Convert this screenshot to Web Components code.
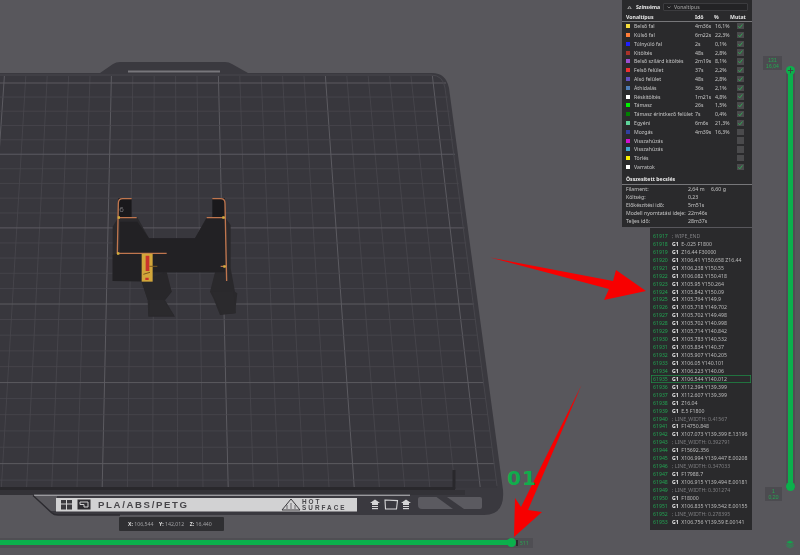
<!DOCTYPE html>
<html>
<head>
<meta charset="utf-8">
<title>Preview</title>
<style>
  html, body { margin: 0; padding: 0; background: #58575c; overflow: hidden; }
  body { font-family: "Noto Sans", "Liberation Sans", sans-serif; }
</style>
</head>
<body>
<slicer-app>
  <bed-view></bed-view>

  <legend-panel>
    <legend-row color="#f5dc3c" name="Belső fal" time="4m36s" pct="16,1%" checked></legend-row>
    <legend-row color="#ff7d38" name="Külső fal" time="6m22s" pct="22,3%" checked></legend-row>
    <legend-row color="#1f1fff" name="Túlnyúló fal" time="2s" pct="0,1%" checked></legend-row>
    <legend-row color="#a8322a" name="Kitöltés" time="48s" pct="2,8%" checked></legend-row>
    <legend-row color="#9a4fd0" name="Belső szilárd kitöltés" time="2m19s" pct="8,1%" checked></legend-row>
    <legend-row color="#f03030" name="Felső felület" time="37s" pct="2,2%" checked></legend-row>
    <legend-row color="#6050c0" name="Alsó felület" time="48s" pct="2,8%" checked></legend-row>
    <legend-row color="#4f7fb8" name="Áthidalás" time="36s" pct="2,1%" checked></legend-row>
    <legend-row color="#ffffff" name="Réskitöltés" time="1m21s" pct="4,8%" checked></legend-row>
    <legend-row color="#00f000" name="Támasz" time="26s" pct="1,5%" checked></legend-row>
    <legend-row color="#008000" name="Támasz érintkező felület" time="7s" pct="0,4%" checked></legend-row>
    <legend-row color="#5ed39a" name="Egyéni" time="6m6s" pct="21,3%" checked></legend-row>
    <legend-row color="#3040a0" name="Mozgás" time="4m39s" pct="16,3%"></legend-row>
    <legend-row color="#d010d0" name="Visszahúzás"></legend-row>
    <legend-row color="#40a8d0" name="Visszahúzás"></legend-row>
    <legend-row color="#f8f000" name="Törlés"></legend-row>
    <legend-row color="#ffffff" name="Varratok" checked></legend-row>
    <summary-row slot="summary" label="Filament:" value="2,64 m" extra="6,60 g"></summary-row>
    <summary-row slot="summary" label="Költség:" value="0,23"></summary-row>
    <summary-row slot="summary" label="Előkészítési idő:" value="5m51s"></summary-row>
    <summary-row slot="summary" label="Modell nyomtatási ideje:" value="22m46s"></summary-row>
    <summary-row slot="summary" label="Teljes idő:" value="28m37s"></summary-row>
  </legend-panel>

  <gcode-panel>
    <gcode-line n="61917">; WIPE_END</gcode-line>
    <gcode-line n="61918" cmd="G1">E-.025 F1800</gcode-line>
    <gcode-line n="61919" cmd="G1">Z16.44 F30000</gcode-line>
    <gcode-line n="61920" cmd="G1">X106.41 Y150.658 Z16.44</gcode-line>
    <gcode-line n="61921" cmd="G1">X106.238 Y150.55</gcode-line>
    <gcode-line n="61922" cmd="G1">X106.082 Y150.418</gcode-line>
    <gcode-line n="61923" cmd="G1">X105.95 Y150.264</gcode-line>
    <gcode-line n="61924" cmd="G1">X105.842 Y150.09</gcode-line>
    <gcode-line n="61925" cmd="G1">X105.764 Y149.9</gcode-line>
    <gcode-line n="61926" cmd="G1">X105.718 Y149.702</gcode-line>
    <gcode-line n="61927" cmd="G1">X105.702 Y149.498</gcode-line>
    <gcode-line n="61928" cmd="G1">X105.702 Y140.998</gcode-line>
    <gcode-line n="61929" cmd="G1">X105.714 Y140.842</gcode-line>
    <gcode-line n="61930" cmd="G1">X105.783 Y140.532</gcode-line>
    <gcode-line n="61931" cmd="G1">X105.834 Y140.37</gcode-line>
    <gcode-line n="61932" cmd="G1">X105.907 Y140.205</gcode-line>
    <gcode-line n="61933" cmd="G1">X106.05 Y140.101</gcode-line>
    <gcode-line n="61934" cmd="G1">X106.223 Y140.06</gcode-line>
    <gcode-line n="61935" cmd="G1" current>X106.544 Y140.012</gcode-line>
    <gcode-line n="61936" cmd="G1">X112.394 Y139.399</gcode-line>
    <gcode-line n="61937" cmd="G1">X112.607 Y139.399</gcode-line>
    <gcode-line n="61938" cmd="G1">Z16.04</gcode-line>
    <gcode-line n="61939" cmd="G1">E.5 F1800</gcode-line>
    <gcode-line n="61940">; LINE_WIDTH: 0.41567</gcode-line>
    <gcode-line n="61941" cmd="G1">F14750.848</gcode-line>
    <gcode-line n="61942" cmd="G1">X107.073 Y139.399 E.13196</gcode-line>
    <gcode-line n="61943">; LINE_WIDTH: 0.392791</gcode-line>
    <gcode-line n="61944" cmd="G1">F15692.356</gcode-line>
    <gcode-line n="61945" cmd="G1">X106.994 Y139.447 E.00208</gcode-line>
    <gcode-line n="61946">; LINE_WIDTH: 0.347033</gcode-line>
    <gcode-line n="61947" cmd="G1">F17988.7</gcode-line>
    <gcode-line n="61948" cmd="G1">X106.915 Y139.494 E.00181</gcode-line>
    <gcode-line n="61949">; LINE_WIDTH: 0.301274</gcode-line>
    <gcode-line n="61950" cmd="G1">F18000</gcode-line>
    <gcode-line n="61951" cmd="G1">X106.835 Y139.542 E.00155</gcode-line>
    <gcode-line n="61952">; LINE_WIDTH: 0.278395</gcode-line>
    <gcode-line n="61953" cmd="G1">X106.756 Y139.59 E.00141</gcode-line>
  </gcode-panel>

  <layer-slider top-a="131" top-b="16,04" bottom-a="1" bottom-b="0,20"></layer-slider>
  <move-slider value="511"></move-slider>
  <coord-bar x="106,544" y="142,012" z="16,440"></coord-bar>
  <markup-layer></markup-layer>
</slicer-app>

<script>
/* Base app: a fixed-size canvas the overlays sit on */
class SlicerApp extends HTMLElement {
  constructor() {
    super();
    this.attachShadow({ mode: 'open' });
    this.shadowRoot.innerHTML = `
      <style>
        :host {
          display: block;
          position: relative;
          width: 800px;
          height: 555px;
          overflow: hidden;
          background: #58575c;
          font-family: "Noto Sans", "Liberation Sans", sans-serif;
        }
      </style>
      <slot></slot>
    `;
  }
}

/* Build plate drawn on a free canvas */
class BedView extends HTMLElement {
  constructor() {
    super();
    this.attachShadow({ mode: 'open' });
  }

  connectedCallback() {
    this.shadowRoot.innerHTML = `
      <style>
        :host { position: absolute; inset: 0; display: block; }
        svg { display: block; width: 800px; height: 555px; filter: blur(.3px); }
        .plate-label { font-family: "Liberation Sans", sans-serif; font-weight: 700; fill: #47464a; }
      </style>
      <svg viewBox="0 0 800 555" xmlns="http://www.w3.org/2000/svg">
        <path fill="#3a393f" d="M-5 73 H100 L113 64 Q116 62 120 62 H225 Q229 62 232 64 L248 73 H432 Q446 73 449 88 L503 490 Q505 515 484 515 H56 Q53 515 51 513 L33 495 H-5 Z"/>
        <path fill="#38373d" d="M-5 76 H430 Q442 76 445 88 L497 488 H-5 Z"/>
        <rect x="128" y="70.5" width="92" height="2" fill="#77767b"/>
        ${this.gridLines()}
        <path fill="none" stroke="#47464c" stroke-width="1" d="M-5 75 H431 Q443 75 445 88 L497 486"/>
        <rect x="-5" y="487" width="460" height="3" fill="#29282c"/>
        <rect x="452.5" y="470" width="3" height="19" fill="#29282c"/>
        <rect x="-5" y="490" width="470" height="5" fill="#333237"/>
        <rect x="34" y="494.6" width="376" height="1.4" fill="#9a999d"/>

        <path fill="#58575c" d="M-5 496 H33 L53 515 H-5 Z"/>
        <path fill="#58575c" d="M34 496 H57 V511 H50 Z"/>
        <path fill="none" stroke="#2c2b30" stroke-width="1.4" d="M33 495.5 L52 513 Q54 515 58 515 H120"/>
        <rect x="56" y="498" width="301" height="13.5" fill="#d2d2d3"/>
        <g fill="none" stroke="#2e2d31">
          <rect x="61" y="500" width="11" height="9.5" fill="#3a393d" stroke="none"/>
          <path d="M66.5 499 V510 M61 504 H72" stroke="#d2d2d3" stroke-width="1"/>
          <rect x="77.5" y="499.5" width="13" height="10" fill="#2e2d31" stroke="none"/>
          <path d="M80 502 H88 V507 H84 V504.5 H80 Z" fill="none" stroke="#d2d2d3" stroke-width="1"/>
        </g>
        <text class="plate-label" x="98" y="508.2" font-size="9.6" letter-spacing="1.65">PLA/ABS/PETG</text>
        <path d="M282 510 L291 499 L300 510 Z" fill="none" stroke="#3a393d" stroke-width="1"/>
        <path d="M287 509 V505 M291 509 V503 M295 509 V505" stroke="#6a696d" stroke-width="1"/>
        <text class="plate-label" x="302" y="504" font-size="6.4" letter-spacing="2">HOT</text>
        <text class="plate-label" x="302" y="510.4" font-size="6.4" letter-spacing="2">SURFACE</text>

        <g fill="#d6d6d7">
          <path d="M375 499.5 L380 503 H378 V505 H372 V503 H370 Z"/>
          <rect x="372" y="506" width="6" height="1"/><rect x="372" y="508" width="6" height="1.2"/>
          <path d="M406 499.5 L411 503 H409 V505 H403 V503 H401 Z"/>
          <rect x="403" y="506" width="6" height="1"/><rect x="403" y="508" width="6" height="1.2"/>
        </g>
        <path d="M385 500 L397.5 500.6 L396.5 509 L385.5 509 Z" fill="none" stroke="#d6d6d7" stroke-width="1.1"/>
        <path fill="#5b5a60" d="M420 497 H436.5 L453 509 H422 Q418 509 418 505 V499 Q418 497 420 497 Z"/>
        <path fill="#5b5a60" d="M447 497 H480 Q482 497 482 499 V507 Q482 509 480 509 H464 Z"/>

        <g transform="translate(100 185) scale(.3333)">
          <path fill="#2a292c" d="M38 125 L55 97 L112 97 L147 160 L285 160 L320 97 L375 97 L392 120 L392 250 L405 320 L412 325 L405 385 L360 390 L340 340 L330 320 L345 262 L200 262 L200 280 L215 320 L195 345 L225 395 L145 395 L143 345 L125 290 L38 288 Z"/>
          <path fill="#222124" d="M55 205 H200 V262 H125 V288 H38 V210 Z M147 160 H285 L320 100 H375 V262 H200 V205 H60 V110 H112 Z"/>
          <path fill="#1a191c" d="M55 40 H95 V97 H55 Z M337 40 H375 V97 H337 Z"/>
          <path fill="#2b2a2d" d="M150 345 H190 L222 392 H146 Z M335 320 L400 318 L408 385 L365 388 Z"/>
          <path fill="#28272a" d="M125 290 L200 260 L215 320 L195 345 L143 345 Z"/>
          <path fill="none" stroke="#c0764e" stroke-width="4" d="M95 41 H68 Q55 41 55 55 L52 205 H200 M55 98 H110 M337 41 H362 Q375 41 375 55 L380 288 M320 98 H375 M362 244 H380"/>
          <path fill="#d2a63a" d="M125 206 H158 V290 H125 Z"/>
          <path fill="#c8342c" d="M137 212 H148 V258 H137 Z M136 278 H146 V285 H136 Z"/>
          <path fill="none" stroke="#7a5a20" stroke-width="3" d="M130 268 L150 262 M148 244 H172"/>
          <path fill="#d5ae3c" d="M53 94 h7 v7 h-7 z M367 94 h7 v7 h-7 z M51 202 h7 v7 h-7 z M370 241 h7 v7 h-7 z"/>
          <text x="58" y="81" font-size="24" font-family="Noto Sans, sans-serif" fill="#77767a">6</text>
        </g>
      </svg>
    `;
  }

  // Perspective grid of the plate, a major line every five cells
  gridLines() {
    let out = '';
    for (let k = -9; k <= 11; k++) {
      const top = 197 + 21.4 * k;
      const bottom = 203 + 25.2 * k;
      const major = (k + 9) % 5 === 0;
      out += `<line x1="${top}" y1="76" x2="${bottom}" y2="487" stroke="${major ? '#5c5b61' : '#49484e'}" stroke-width="${major ? 1 : .8}"/>`;
    }
    for (let n = 0; n < 28; n++) {
      const y = 83 + 14 * n + 0.049 * n * n;
      if (y > 486) break;
      const right = 446 + (y - 83) * 0.127;
      const major = n % 5 === 0;
      out += `<line x1="-5" y1="${y}" x2="${right}" y2="${y}" stroke="${major ? '#5c5b61' : '#49484e'}" stroke-width="${major ? 1 : .8}"/>`;
    }
    return out;
  }
}

/* Line type legend with the estimate summary */
class LegendPanel extends HTMLElement {
  constructor() {
    super();
    this.attachShadow({ mode: 'open' });
    this.shadowRoot.innerHTML = `
      <style>
        :host {
          position: absolute;
          left: 622px;
          top: 0;
          width: 130px;
          height: 227px;
          display: flex;
          flex-direction: column;
          background: #2a2a2c;
          color: #c6c6c6;
          font-size: 5.2px;
          line-height: 8px;
          filter: blur(.3px);
        }
        .title {
          display: flex;
          align-items: center;
          height: 13px;
          padding: 1px 4px 0 5px;
          box-sizing: border-box;
        }
        .title svg { width: 5px; height: 5px; margin-right: 4px; }
        .title b { color: #e8e8e8; width: 27px; flex: none; }
        .combo {
          flex: 1;
          height: 8px;
          display: flex;
          align-items: center;
          gap: 3px;
          padding-left: 3px;
          background: #232325;
          border: .5px solid #3c3c3f;
          border-radius: 1px;
          box-sizing: border-box;
          color: #a8a8a8;
        }
        .head {
          display: grid;
          grid-template-columns: 69px 19px 16px 1fr;
          height: 8.8px;
          align-items: center;
          padding-left: 4px;
          border-bottom: .7px solid #77777a;
          box-sizing: border-box;
          font-weight: 700;
          color: #e4e4e4;
        }
        .rows { display: flex; flex-direction: column; }
        .total {
          margin-top: 3.6px;
          height: 8.7px;
          padding: 0 4px;
          box-sizing: content-box;
          font-weight: 700;
          color: #ececec;
          border-bottom: .7px solid #77777a;
        }
        .summary { display: flex; flex-direction: column; padding-top: .3px; }
      </style>
      <div class="title">
        <svg viewBox="0 0 10 10"><path d="M1 8 L5 2 L9 8 M3 8 V6 H7 V8" fill="none" stroke="#b5b5b5" stroke-width="1.2"/></svg>
        <b>Színséma</b>
        <div class="combo">
          <svg width="4" height="3" viewBox="0 0 8 6" style="width:4px;height:3px;margin:0"><path d="M1 1 L4 4 L7 1" fill="none" stroke="#aaa" stroke-width="1.2"/></svg>
          <span>Vonaltípus</span>
        </div>
      </div>
      <div class="head"><span>Vonaltípus</span><span>Idő</span><span>%</span><span>Mutat</span></div>
      <div class="rows"><slot></slot></div>
      <div class="total">Összesített becslés</div>
      <div class="summary"><slot name="summary"></slot></div>
    `;
  }
}

class LegendRow extends HTMLElement {
  constructor() {
    super();
    this.attachShadow({ mode: 'open' });
  }

  connectedCallback() {
    const on = this.hasAttribute('checked');
    this.shadowRoot.innerHTML = `
      <style>
        :host {
          display: grid;
          grid-template-columns: 8px 61px 20px 22px 8px;
          height: 8.8px;
          align-items: center;
          padding-left: 4px;
          white-space: nowrap;
        }
        i { display: block; width: 4px; height: 4px; background: ${this.getAttribute('color')}; }
        .box {
          width: 6.5px;
          height: 6.5px;
          background: #4a4a4c;
          grid-column: 5;
        }
        .box svg { display: block; width: 6.5px; height: 6.5px; }
      </style>
      <i></i>
      <span>${this.getAttribute('name')}</span>
      <span>${this.getAttribute('time') || ''}</span>
      <span>${this.getAttribute('pct') || ''}</span>
      <div class="box">${on ? '<svg viewBox="0 0 10 10"><path d="M2 5 L4.2 7.6 L8.4 2.2" fill="none" stroke="#2fa552" stroke-width="1.5"/></svg>' : ''}</div>
    `;
  }
}

class SummaryRow extends HTMLElement {
  constructor() {
    super();
    this.attachShadow({ mode: 'open' });
  }

  connectedCallback() {
    this.shadowRoot.innerHTML = `
      <style>
        :host {
          display: grid;
          grid-template-columns: 62px 23px 1fr;
          height: 8px;
          align-items: center;
          padding-left: 4px;
          white-space: nowrap;
        }
      </style>
      <span>${this.getAttribute('label')}</span>
      <span>${this.getAttribute('value')}</span>
      <span>${this.getAttribute('extra') || ''}</span>
    `;
  }
}

/* G-code viewer list */
class GcodePanel extends HTMLElement {
  constructor() {
    super();
    this.attachShadow({ mode: 'open' });
    this.shadowRoot.innerHTML = `
      <style>
        :host {
          position: absolute;
          left: 650px;
          top: 228px;
          width: 102px;
          height: 302px;
          box-sizing: border-box;
          padding-top: 4px;
          display: flex;
          flex-direction: column;
          background: #2a2a2c;
          font-size: 5.2px;
          filter: blur(.3px);
        }
      </style>
      <slot></slot>
    `;
  }
}

class GcodeLine extends HTMLElement {
  constructor() {
    super();
    this.attachShadow({ mode: 'open' });
  }

  connectedCallback() {
    const cmd = this.getAttribute('cmd');
    this.shadowRoot.innerHTML = `
      <style>
        :host {
          display: flex;
          align-items: center;
          height: 7.95px;
          flex: none;
          padding-left: 3px;
          white-space: nowrap;
          color: ${cmd ? '#bcbcbc' : '#7e7e81'};
        }
        :host([current]) { box-shadow: inset 0 0 0 .7px #1f8a45; margin-left: 1px; margin-right: 1px; padding-left: 2px; }
        .n { width: 19px; color: #22a352; flex: none; }
        b { color: #ececec; margin-right: 2.5px; }
      </style>
      <span class="n">${this.getAttribute('n')}</span>
      ${cmd ? `<b>${cmd}</b>` : ''}<slot></slot>
    `;
  }
}

/* Vertical layer slider on the right edge */
class LayerSlider extends HTMLElement {
  constructor() {
    super();
    this.attachShadow({ mode: 'open' });
  }

  connectedCallback() {
    this.shadowRoot.innerHTML = `
      <style>
        :host {
          position: absolute;
          left: 762px;
          top: 56px;
          width: 38px;
          height: 495px;
          display: block;
          font: 5.2px/6.2px "Liberation Sans", sans-serif;
          color: #1fa550;
          text-align: center;
        }
        .track { position: absolute; left: 24px; top: 13px; width: 9px; height: 420px; background: #4f4e53; }
        .fill { position: absolute; left: 2px; top: 0; bottom: 0; width: 5px; background: #0bb04c; }
        .knob { position: absolute; left: 24px; width: 9px; height: 9px; border-radius: 50%; background: #0bb04c; }
        .knob.top { top: 9.5px; }
        .knob.top svg { display: block; width: 9px; height: 9px; }
        .knob.bottom { top: 426px; }
        .tag { position: absolute; background: #4c4b50; box-sizing: border-box; padding-top: 1px; }
        .tag.top { left: 1px; top: 0; width: 19px; height: 14px; }
        .tag.bottom { left: 3px; top: 431px; width: 17px; height: 14px; }
        .tag span { display: block; height: 6.2px; }
        .layers { position: absolute; left: 24px; top: 484px; width: 8px; height: 8px; }
      </style>
      <div class="tag top"><span>${this.getAttribute('top-a')}</span><span>${this.getAttribute('top-b')}</span></div>
      <div class="track"><div class="fill"></div></div>
      <div class="knob top"><svg viewBox="0 0 8 8"><path d="M4 1.6 V6.4 M1.6 4 H6.4" stroke="#3f3f42" stroke-width=".8"/></svg></div>
      <div class="knob bottom"></div>
      <div class="tag bottom"><span>${this.getAttribute('bottom-a')}</span><span>${this.getAttribute('bottom-b')}</span></div>
      <svg class="layers" viewBox="0 0 10 10">
        <path d="M5 .6 L9.6 2.8 L5 5 L.4 2.8 Z" fill="#15a04c"/>
        <path d="M.6 4.6 L5 6.7 L9.4 4.6 L9.4 5.6 L5 7.7 L.6 5.6 Z" fill="#15a04c"/>
        <path d="M.6 7 L5 9.1 L9.4 7 L9.4 7.8 L5 9.9 L.6 7.8 Z" fill="#15a04c"/>
      </svg>
    `;
  }
}

/* Horizontal move slider along the bottom */
class MoveSlider extends HTMLElement {
  constructor() {
    super();
    this.attachShadow({ mode: 'open' });
  }

  connectedCallback() {
    this.shadowRoot.innerHTML = `
      <style>
        :host {
          position: absolute;
          left: 0;
          top: 538px;
          width: 533px;
          height: 9.5px;
          display: flex;
          align-items: center;
          background: #4f4e53;
          font-size: 5.2px;
          color: #1fa550;
        }
        .fill { width: 511px; height: 5px; background: #0bb04c; }
        .knob { width: 9px; height: 9px; margin-left: -4px; border-radius: 50%; background: #0bb04c; flex: none; }
        .grip { width: 2px; height: 6px; margin: 0 2px 0 0; background: #2c2c2f; flex: none; }
      </style>
      <div class="fill"></div>
      <div class="knob"></div>
      <div class="grip"></div>
      <span>${this.getAttribute('value')}</span>
    `;
  }
}

class CoordBar extends HTMLElement {
  constructor() {
    super();
    this.attachShadow({ mode: 'open' });
  }

  connectedCallback() {
    const axis = ['x', 'y', 'z'].map(a =>
      `<span><b>${a.toUpperCase()}:</b> ${this.getAttribute(a)}</span>`).join('');
    this.shadowRoot.innerHTML = `
      <style>
        :host {
          position: absolute;
          left: 119px;
          top: 517px;
          width: 105px;
          height: 14px;
          box-sizing: border-box;
          padding-left: 9px;
          display: flex;
          align-items: center;
          gap: 5.5px;
          background: #2f2f32;
          border-radius: 1px;
          font-size: 5.2px;
          color: #a0a0a3;
          white-space: nowrap;
          filter: blur(.3px);
        }
        b { color: #dcdcdc; }
      </style>
      ${axis}
    `;
  }
}

/* Hand-drawn annotations placed over the screenshot */
class MarkupLayer extends HTMLElement {
  constructor() {
    super();
    this.attachShadow({ mode: 'open' });
    this.shadowRoot.innerHTML = `
      <style>
        :host { position: absolute; inset: 0; display: block; pointer-events: none; }
        svg { position: absolute; inset: 0; width: 800px; height: 555px; }
        span {
          position: absolute;
          left: 507px;
          top: 465px;
          font: 700 20px/26px "DejaVu Sans", sans-serif;
          letter-spacing: 1px;
          color: #10ad4c;
        }
      </style>
      <svg viewBox="0 0 800 555" xmlns="http://www.w3.org/2000/svg">
        <path fill="#f80000" d="M490 257.5 L613 281 L616 270 L646 291 L604 300 L609 289 Z"/>
        <path fill="#f80000" d="M581.5 385 L528 510 L542 512 L514 537 L515 498 L521 507 Z"/>
      </svg>
      <span>01</span>
    `;
  }
}

customElements.define('slicer-app', SlicerApp);
customElements.define('bed-view', BedView);
customElements.define('legend-panel', LegendPanel);
customElements.define('legend-row', LegendRow);
customElements.define('summary-row', SummaryRow);
customElements.define('gcode-panel', GcodePanel);
customElements.define('gcode-line', GcodeLine);
customElements.define('layer-slider', LayerSlider);
customElements.define('move-slider', MoveSlider);
customElements.define('coord-bar', CoordBar);
customElements.define('markup-layer', MarkupLayer);
</script>
</body>
</html>
